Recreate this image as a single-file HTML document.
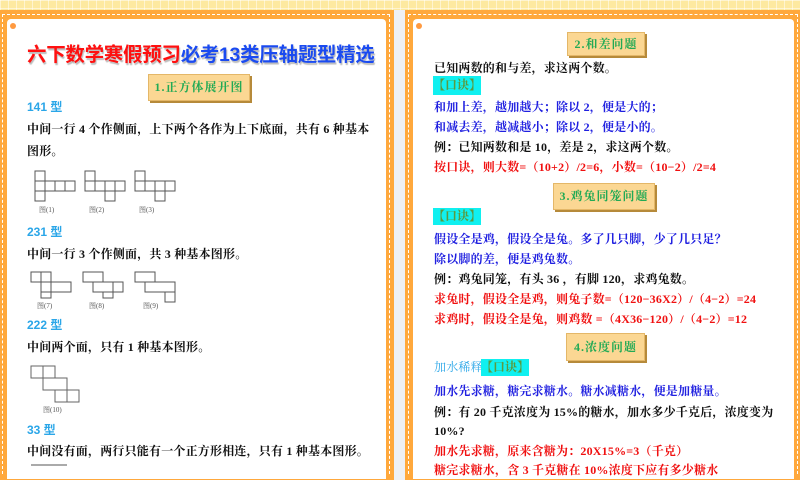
<!DOCTYPE html>
<html><head><meta charset="utf-8"><style>
*{margin:0;padding:0;box-sizing:border-box}
body{width:800px;height:468px;overflow:hidden;background:#eef0f5;position:relative;font-family:"Liberation Serif","Noto Serif CJK SC",serif}
.top{position:absolute;left:0;top:0;width:800px;height:10px;background:#fde9a0;background-image:linear-gradient(90deg,rgba(255,255,255,.5) 1px,transparent 1px),linear-gradient(rgba(255,255,255,.5) 1px,transparent 1px);background-size:8px 8px}
.pan{position:absolute;top:10px;height:470px;background:#ffa83c}
.dash{position:absolute;border:1.5px dashed #fff;border-bottom:none}
.in{position:absolute;top:19px;height:460px;background:#fff;border-radius:4px 4px 0 0}
.t{position:absolute;white-space:nowrap;font-size:12px;font-weight:bold;letter-spacing:0.2px;line-height:14px}
.k{color:#111}.b{color:#2020e0}.r{color:#f01010}.lb{color:#2aa6e8;font-family:"Liberation Sans","Noto Sans CJK SC",sans-serif;font-weight:bold;letter-spacing:0}
.btn{position:absolute;background:#fbd793;border:1px solid #e4b768;box-shadow:2px 2px 0 #b68a3a;color:#22aa55;font-weight:bold;font-size:12px;text-align:center;letter-spacing:1px}
.kj{position:absolute;background:#10f0f0;color:#5a9a40;font-weight:bold;font-size:12px;text-align:center}
.dot{position:absolute;width:6px;height:6px;border-radius:50%;background:#ff9a40}
</style></head><body>
<div class="top"></div>
<div class="pan" style="left:0;width:394px"></div>
<div class="dash" style="left:2px;top:14px;width:388px;height:460px"></div>
<div class="in" style="left:7px;width:379px"></div>
<div class="pan" style="left:405px;width:395px"></div>
<div class="dash" style="left:408px;top:14px;width:390px;height:460px"></div>
<div class="in" style="left:413px;width:381px"></div>
<div class="dot" style="left:10px;top:23px"></div>
<div class="dot" style="left:416px;top:23px"></div>

<div style="position:absolute;left:27px;top:38px;font-family:'Liberation Sans','Noto Sans CJK SC',sans-serif;font-weight:bold;font-size:19.5px;white-space:nowrap;letter-spacing:-0.3px;text-shadow:1px 2px 1px #bbb"><span style="color:#ff1010">六下数学寒假预习</span><span style="color:#1a4af0">必考13类压轴题型精选</span></div>
<div class="btn" style="left:148px;top:74px;width:102px;height:27px;line-height:25px">1.正方体展开图</div>
<div class="t lb" style="left:27px;top:100px">141 型</div>
<div class="t k" style="left:27px;top:122px">中间一行 4 个作侧面，上下两个各作为上下底面，共有 6 种基本</div>
<div class="t k" style="left:27px;top:144px">图形。</div>
<svg style="position:absolute;left:27px;top:168px" width="150" height="48" fill="none" stroke="#555" stroke-width="1">
<path d="M8 3h10v30H8zM8 13h40v10H8zM28 13v10M38 13v10"/>
<path d="M58 3h10v20H58zM58 13h40v10H58zM78 13v20h10V23M88 13v10"/>
<path d="M108 3h10v20h-10zM108 13h40v10h-40zM128 13v10M138 13v10M128 23v10h10V23"/>
<text x="12" y="44" font-size="7" fill="#555" stroke="none">图(1)</text><text x="62" y="44" font-size="7" fill="#555" stroke="none">图(2)</text><text x="112" y="44" font-size="7" fill="#555" stroke="none">图(3)</text>
</svg>
<div class="t lb" style="left:27px;top:225px">231 型</div>
<div class="t k" style="left:27px;top:247px">中间一行 3 个作侧面，共 3 种基本图形。</div>
<svg style="position:absolute;left:27px;top:268px" width="150" height="44" fill="none" stroke="#555" stroke-width="1">
<path d="M4 4h20v10H4zM14 4v26h10V14M24 14h20v10H14"/>
<path d="M56 4h20v10H56zM66 14v10h30V14H66M86 14v16h-10V24"/>
<path d="M108 4h20v10h-20zM118 14v10h30V14h-30M138 24v10h10V24"/>
<text x="10" y="40" font-size="7" fill="#555" stroke="none">图(7)</text><text x="62" y="40" font-size="7" fill="#555" stroke="none">图(8)</text><text x="116" y="40" font-size="7" fill="#555" stroke="none">图(9)</text>
</svg>
<div class="t lb" style="left:27px;top:318px">222 型</div>
<div class="t k" style="left:27px;top:340px">中间两个面，只有 1 种基本图形。</div>
<svg style="position:absolute;left:27px;top:362px" width="60" height="52" fill="none" stroke="#666" stroke-width="1">
<path d="M4 4h24v12H4zM16 4v24h24V16H16M40 16v24h12V28H28v12h12"/>
<text x="16" y="50" font-size="7" fill="#555" stroke="none">图(10)</text>
</svg>
<div class="t lb" style="left:27px;top:423px">33 型</div>
<div class="t k" style="left:27px;top:444px">中间没有面，两行只能有一个正方形相连，只有 1 种基本图形。</div>
<svg style="position:absolute;left:27px;top:464px" width="60" height="4"><path d="M4 1h36" stroke="#555"/></svg>

<div class="btn" style="left:567px;top:32px;width:78px;height:24px;line-height:22px">2.和差问题</div>
<div class="t k" style="left:434px;top:61px">已知两数的和与差，求这两个数。</div>
<div class="kj" style="left:433px;top:76px;width:48px;height:19px;line-height:19px">【口诀】</div>
<div class="t b" style="left:434px;top:100px">和加上差，越加越大；除以 2，便是大的；</div>
<div class="t b" style="left:434px;top:120px">和减去差，越减越小；除以 2，便是小的。</div>
<div class="t k" style="left:434px;top:140px">例：已知两数和是 10，差是 2，求这两个数。</div>
<div class="t r" style="left:434px;top:160px">按口诀，则大数=（10+2）/2=6，小数=（10−2）/2=4</div>
<div class="btn" style="left:553px;top:183px;width:102px;height:27px;line-height:25px">3.鸡兔同笼问题</div>
<div class="kj" style="left:433px;top:208px;width:48px;height:17px;line-height:17px">【口诀】</div>
<div class="t b" style="left:434px;top:232px">假设全是鸡，假设全是兔。多了几只脚，少了几只足？</div>
<div class="t b" style="left:434px;top:252px">除以脚的差，便是鸡兔数。</div>
<div class="t k" style="left:434px;top:272px">例：鸡兔同笼，有头 36 ，有脚 120，求鸡兔数。</div>
<div class="t r" style="left:434px;top:292px">求兔时，假设全是鸡，则兔子数=（120−36X2）/（4−2）=24</div>
<div class="t r" style="left:434px;top:312px">求鸡时，假设全是兔，则鸡数 =（4X36−120）/（4−2）=12</div>
<div class="btn" style="left:566px;top:333px;width:79px;height:28px;line-height:26px">4.浓度问题</div>
<div class="t" style="left:434px;top:360px;color:#2aa6e8;font-weight:normal">加水稀释</div>
<div class="kj" style="left:481px;top:359px;width:48px;height:17px;line-height:17px">【口诀】</div>
<div class="t b" style="left:434px;top:384px">加水先求糖，糖完求糖水。糖水减糖水，便是加糖量。</div>
<div class="t k" style="left:434px;top:405px">例：有 20 千克浓度为 15%的糖水，加水多少千克后，浓度变为</div>
<div class="t k" style="left:434px;top:424px">10%?</div>
<div class="t r" style="left:434px;top:444px">加水先求糖，原来含糖为：20X15%=3（千克）</div>
<div class="t r" style="left:434px;top:463px">糖完求糖水，含 3 千克糖在 10%浓度下应有多少糖水</div>
</body></html>
